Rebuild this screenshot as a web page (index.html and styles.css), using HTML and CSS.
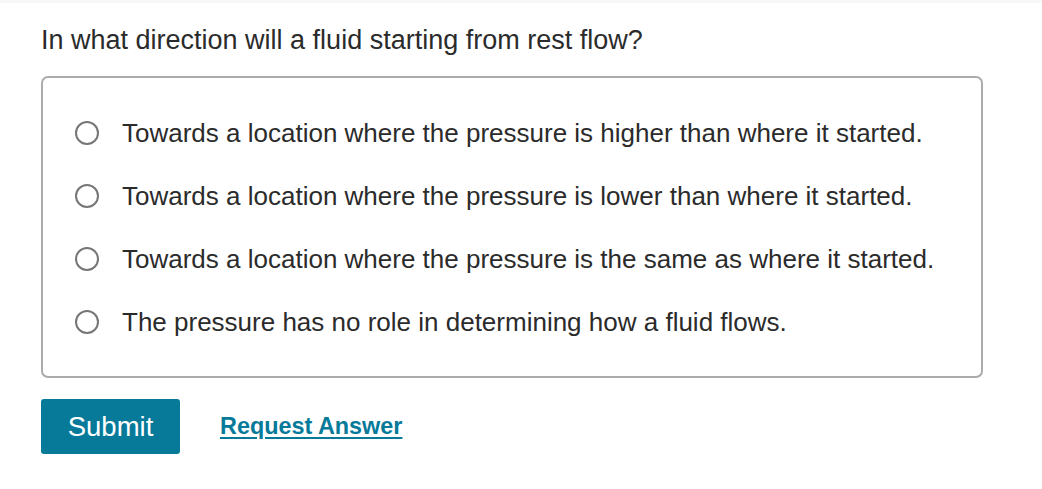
FILE: index.html
```html
<!DOCTYPE html>
<html lang="en">
<head>
<meta charset="utf-8">
<title>Question</title>
<link rel="stylesheet" href="styles.css">
</head>
<body>
<div class="topbar"></div>
<main class="page">
  <p class="question">In what direction will a fluid starting from rest flow?</p>
  <div class="options">
    <label class="option"><span class="radio"></span><span class="label">Towards a location where the pressure is higher than where it started.</span></label>
    <label class="option"><span class="radio"></span><span class="label">Towards a location where the pressure is lower than where it started.</span></label>
    <label class="option"><span class="radio"></span><span class="label">Towards a location where the pressure is the same as where it started.</span></label>
    <label class="option"><span class="radio"></span><span class="label">The pressure has no role in determining how a fluid flows.</span></label>
  </div>
  <div class="actions">
    <button class="submit" type="button">Submit</button>
    <a class="request" href="#">Request Answer</a>
  </div>
</main>
</body>
</html>
```
FILE: styles.css
```css
html, body {
  margin: 0;
  padding: 0;
  background: #ffffff;
}
body {
  font-family: "Liberation Sans", Arial, sans-serif;
  color: #2b2b2b;
  width: 1042px;
  height: 489px;
  overflow: hidden;
}
.topbar {
  height: 3px;
  background: #f7f7f7;
}
.page {
  padding-left: 41px;
}
.question {
  margin: 22px 0 0 0;
  font-size: 27px;
  line-height: 31px;
}
.options {
  box-sizing: border-box;
  width: 942px;
  margin-top: 20px;
  border: 2px solid #ababab;
  border-radius: 7px;
  padding: 24px 0 22px 32px;
  display: flex;
  flex-direction: column;
}
.option {
  height: 63px;
  display: flex;
  align-items: center;
  font-size: 26px;
  line-height: 31px;
}
.radio {
  box-sizing: border-box;
  width: 24px;
  height: 24px;
  border: 2px solid #767676;
  border-radius: 50%;
  margin-right: 23px;
  margin-top: -2px;
  flex: none;
}
.actions {
  margin-top: 21px;
  display: flex;
  align-items: center;
  gap: 40px;
}
.submit {
  width: 139px;
  height: 55px;
  border: none;
  border-radius: 3px;
  background: #077a9a;
  color: #ffffff;
  font-family: "Liberation Sans", Arial, sans-serif;
  font-size: 27.5px;
  padding: 0;
}
.request {
  color: #077a9a;
  font-weight: bold;
  font-size: 23.4px;
  text-decoration: underline;
  text-underline-offset: 3px;
  text-decoration-thickness: 2px;
}
```
